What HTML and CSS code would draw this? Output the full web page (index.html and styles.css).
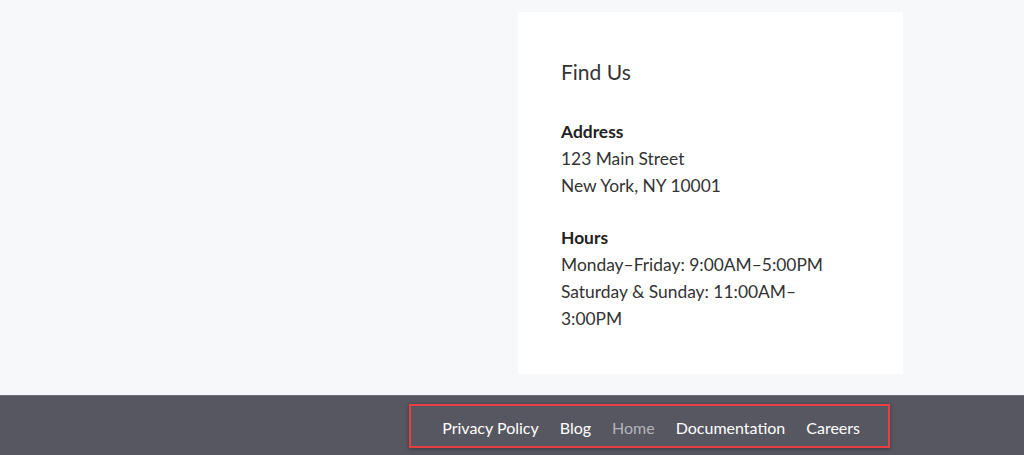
FILE: index.html
```html
<!DOCTYPE html>
<html>
<head>
<meta charset="utf-8">
<link rel="stylesheet" href="styles.css">
</head>
<body>
<main class="page">
  <div class="spacer"></div>
  <section class="card">
    <h2 class="title">Find Us</h2>
    <div class="block">
      <div class="label">Address</div>
      <div>123 Main Street</div>
      <div>New York, NY 10001</div>
    </div>
    <div class="block">
      <div class="label">Hours</div>
      <div>Monday–Friday: 9:00AM–5:00PM</div>
      <div>Saturday &amp; Sunday: 11:00AM–3:00PM</div>
    </div>
  </section>
</main>
<footer class="footer">
  <nav class="nav">
    <a href="#">Privacy Policy</a>
    <a href="#">Blog</a>
    <a href="#" class="current">Home</a>
    <a href="#">Documentation</a>
    <a href="#">Careers</a>
  </nav>
</footer>
</body>
</html>
```
FILE: styles.css
```css
html, body {
  margin: 0;
  padding: 0;
}
body {
  background: #f7f8fa;
  font-family: "Lato", "Noto Sans", sans-serif;
  color: #333;
  overflow: hidden;
}
.page {
  display: grid;
  grid-template-columns: 1fr 385px;
  padding: 12px 121px 21px 0;
}
.card {
  background: #fff;
  padding: 43px 60px 41px 43px;
  font-size: 17.4px;
  line-height: 26.8px;
  color: #333;
}
.title {
  margin: 0;
  font-weight: 400;
  font-size: 21px;
  line-height: 34px;
  color: #333;
}
.block {
  margin-top: 30px;
}
.block + .block {
  margin-top: 26px;
}
.label {
  font-weight: 700;
  color: #222;
}
.footer {
  background: #575761;
  border-top: 1px solid #6e6e78;
  height: 60px;
  display: flex;
  justify-content: flex-end;
  padding: 8px 134px 0 0;
  box-sizing: border-box;
}
.nav {
  display: flex;
  align-items: center;
  gap: 21px;
  height: 44px;
  padding: 3px 28px 0 31px;
  box-sizing: border-box;
  border: 2px solid #e84040;
  box-shadow: 0 1px 4px rgba(0,0,0,0.35);
  font-size: 16px;
}
.nav a {
  color: #fff;
  text-decoration: none;
}
.nav a.current {
  color: #b4b4ba;
}
```
